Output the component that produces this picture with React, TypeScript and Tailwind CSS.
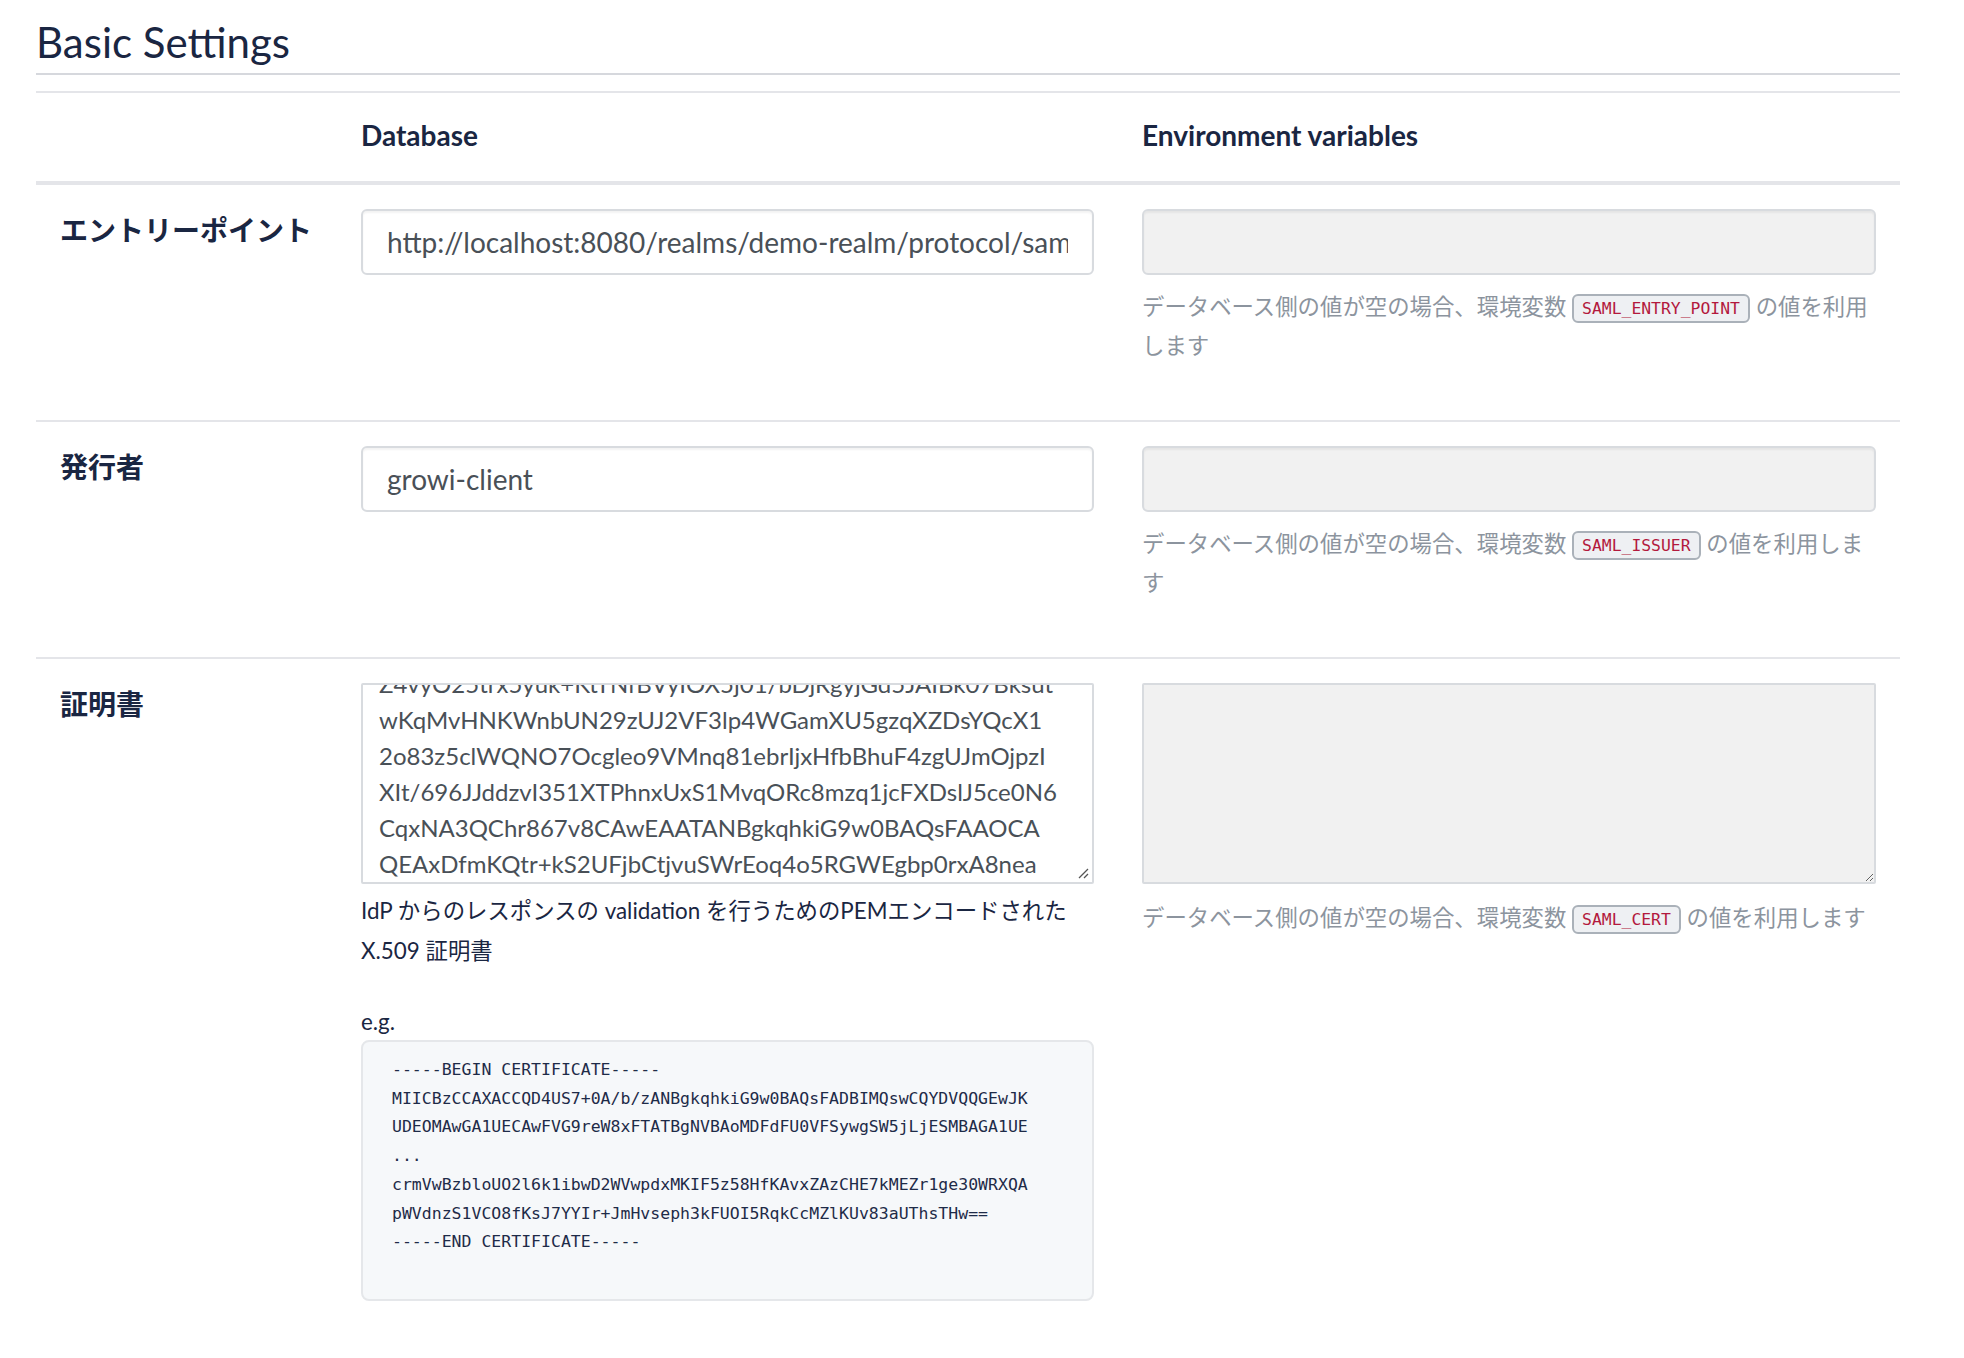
import React from 'react'

const certLines = [
  'Z4vyO25trx5yuk+KtTNfBVyIOX5j01/bDjRgyjGd5JAIBk07Bksut',
  'wKqMvHNKWnbUN29zUJ2VF3lp4WGamXU5gzqXZDsYQcX1',
  '2o83z5clWQNO7Ocgleo9VMnq81ebrIjxHfbBhuF4zgUJmOjpzI',
  'XIt/696JJddzvI351XTPhnxUxS1MvqORc8mzq1jcFXDslJ5ce0N6',
  'CqxNA3QChr867v8CAwEAATANBgkqhkiG9w0BAQsFAAOCA',
  'QEAxDfmKQtr+kS2UFjbCtjvuSWrEoq4o5RGWEgbp0rxA8nea',
]

const example = [
  '-----BEGIN CERTIFICATE-----',
  'MIICBzCCAXACCQD4US7+0A/b/zANBgkqhkiG9w0BAQsFADBIMQswCQYDVQQGEwJK',
  'UDEOMAwGA1UECAwFVG9reW8xFTATBgNVBAoMDFdFU0VFSywgSW5jLjESMBAGA1UE',
  '...',
  'crmVwBzbloUO2l6k1ibwD2WVwpdxMKIF5z58HfKAvxZAzCHE7kMEZr1ge30WRXQA',
  'pWVdnzS1VCO8fKsJ7YYIr+JmHvseph3kFUOI5RqkCcMZlKUv83aUThsTHw==',
  '-----END CERTIFICATE-----',
].join('\n')

function EnvCode({ name }: { name: string }) {
  return (
    <code className="inline-block align-[1px] rounded-[6px] border-2 border-[#aab1b9] bg-[#eef0f3] px-[8px] font-[family-name:'DejaVu_Sans_Mono',monospace] text-[16.4px] leading-[25px] text-[#b3193d]">
      {name}
    </code>
  )
}

function EnvHelp({ name }: { name: string }) {
  return (
    <p className="mt-[12px] text-[22.4px] leading-[39px] text-[#8c949e]">
      データベース側の値が空の場合、環境変数 <EnvCode name={name} /> の値を利用します
    </p>
  )
}

function Grip() {
  return (
    <svg className="absolute right-[3px] bottom-[3px]" width="12" height="12" viewBox="0 0 12 12">
      <path d="M11 2 L2 11 M11 7 L7 11" stroke="#555" strokeWidth="1.3" fill="none" />
    </svg>
  )
}

export default function App() {
  return (
    <div className="min-h-screen bg-white pl-[36px] pt-[17px] font-[family-name:Lato,'Noto_Sans_CJK_JP',sans-serif] text-[#1a2642]">
      <h2 className="w-[1864px] border-b-2 border-[#d6d8dd] pb-[6px] text-[42px] leading-[50px]">Basic Settings</h2>

      <table className="mt-[16px] w-[1864px] table-fixed border-collapse">
        <colgroup>
          <col className="w-[301px]" />
          <col className="w-[781px]" />
          <col className="w-[782px]" />
        </colgroup>
        <thead>
          <tr className="border-t-2 border-b-4 border-[#e4e5e9]">
            <th className="px-[24px] pt-[21px] pb-[25px]" />
            <th className="px-[24px] pt-[21px] pb-[25px] text-left align-bottom text-[28px] leading-[42px] font-bold">Database</th>
            <th className="px-[24px] pt-[21px] pb-[25px] text-left align-bottom text-[28px] leading-[42px] font-bold">Environment variables</th>
          </tr>
        </thead>
        <tbody>
          {/* entry point */}
          <tr className="border-t-2 border-[#e4e5e9]">
            <th className="px-[24px] pt-[24px] pb-[23px] text-left align-top text-[28px] leading-[42px] font-bold">エントリーポイント</th>
            <td className="px-[24px] pt-[24px] pb-[23px] align-top">
              <input
                readOnly
                value="http://localhost:8080/realms/demo-realm/protocol/saml"
                className="block h-[66px] w-full rounded-[6px] border-2 border-[#d8dbdf] bg-white px-[24px] text-[28px] text-[#495057] shadow-[inset_0_2px_2px_rgba(0,0,0,0.05)] outline-none"
              />
            </td>
            <td className="px-[24px] pt-[24px] pb-[23px] align-top">
              <div className="mb-[32px]">
                <input readOnly className="block h-[66px] w-full rounded-[6px] border-2 border-[#d8dbdf] bg-[#f1f1f1] shadow-[inset_0_2px_2px_rgba(0,0,0,0.05)] outline-none" />
                <EnvHelp name="SAML_ENTRY_POINT" />
              </div>
            </td>
          </tr>

          {/* issuer */}
          <tr className="border-t-2 border-[#e4e5e9]">
            <th className="px-[24px] pt-[24px] pb-[23px] text-left align-top text-[28px] leading-[42px] font-bold">発行者</th>
            <td className="px-[24px] pt-[24px] pb-[23px] align-top">
              <input
                readOnly
                value="growi-client"
                className="block h-[66px] w-full rounded-[6px] border-2 border-[#d8dbdf] bg-white px-[24px] text-[28px] text-[#495057] shadow-[inset_0_2px_2px_rgba(0,0,0,0.05)] outline-none"
              />
            </td>
            <td className="px-[24px] pt-[24px] pb-[23px] align-top">
              <div className="mb-[32px]">
                <input readOnly className="block h-[66px] w-full rounded-[6px] border-2 border-[#d8dbdf] bg-[#f1f1f1] shadow-[inset_0_2px_2px_rgba(0,0,0,0.05)] outline-none" />
                <EnvHelp name="SAML_ISSUER" />
              </div>
            </td>
          </tr>

          {/* certificate */}
          <tr className="border-t-2 border-[#e4e5e9]">
            <th className="px-[24px] pt-[24px] pb-[23px] text-left align-top text-[28px] leading-[42px] font-bold">証明書</th>
            <td className="px-[24px] pt-[24px] pb-[23px] align-top">
              <div className="relative flex h-[201px] flex-col justify-end overflow-hidden rounded-[2px] border-2 border-[#d8dbdf] bg-white px-[16px] text-[24px] leading-[36px] text-[#495057] whitespace-nowrap">
                {certLines.map(l => (
                  <div key={l}>{l}</div>
                ))}
                <Grip />
              </div>
              <p className="mt-[7px] text-[22.4px] leading-[40px]">
                IdP からのレスポンスの validation を行うためのPEMエンコードされた X.509 証明書
              </p>
              <p className="mt-[35px] text-[22.4px] leading-[32px]">e.g.</p>
              <pre className="mt-[2px] rounded-[8px] border-2 border-[#e5e7ea] bg-[#f6f8fa] px-[29px] pt-[14px] pb-[42px] font-[family-name:'DejaVu_Sans_Mono',monospace] text-[16.5px] leading-[28.7px] text-[#1e2b48]">
                {example}
              </pre>
            </td>
            <td className="px-[24px] pt-[24px] pb-[23px] align-top">
              <textarea readOnly className="block h-[201px] w-full rounded-[2px] border-2 border-[#d8dbdf] bg-[#f1f1f1] outline-none" />
              <div className="pt-[2px]">
                <EnvHelp name="SAML_CERT" />
              </div>
            </td>
          </tr>
        </tbody>
      </table>
    </div>
  )
}
